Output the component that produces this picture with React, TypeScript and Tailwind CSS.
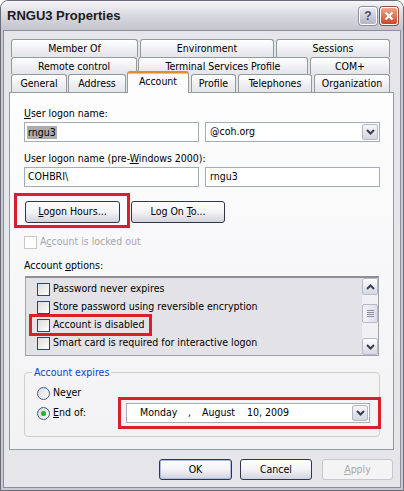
import React from "react";

type Tab = { label: string; cls: string; active?: boolean };

const tabRows: Tab[][] = [
  [
    { label: "Member Of", cls: "w-[127px]" },
    { label: "Environment", cls: "w-[134px] ml-[2px]" },
    { label: "Sessions", cls: "w-[114px] ml-[2px]" },
  ],
  [
    { label: "Remote control", cls: "w-[126px]" },
    { label: "Terminal Services Profile", cls: "w-[170px] ml-[1px]" },
    { label: "COM+", cls: "w-[80px] ml-[2px]" },
  ],
  [
    { label: "General", cls: "w-[56px]" },
    { label: "Address", cls: "w-[58px] ml-[1px]" },
    { label: "Account", cls: "w-[62px] ml-[1px]", active: true },
    { label: "Profile", cls: "w-[45px] ml-[2px]" },
    { label: "Telephones", cls: "w-[74px] ml-[2px]" },
    { label: "Organization", cls: "w-[76px] ml-[2px]" },
  ],
];

const rowHeights = ["h-[18px]", "h-[17px]", "h-[18px]"];

const options = [
  "Password never expires",
  "Store password using reversible encryption",
  "Account is disabled",
  "Smart card is required for interactive logon",
  "Account is trusted for delegation",
];

function Key({ children }: { children: React.ReactNode }) {
  return <span className="underline underline-offset-[1px]">{children}</span>;
}

function Chevron({ up }: { up?: boolean }) {
  return (
    <svg width="9" height="6" viewBox="0 0 9 6">
      <path
        d={up ? "M1 5 L4.5 1.5 L8 5" : "M1 1 L4.5 4.5 L8 1"}
        fill="none"
        stroke="#3a3d4e"
        strokeWidth="2"
      />
    </svg>
  );
}

function DropButton() {
  return (
    <div className="w-[16px] h-[16px] shrink-0 flex items-center justify-center rounded-[2px] border border-[#b3b8c6] bg-linear-to-b from-[#f7f7fa] to-[#d3d5e0]">
      <Chevron />
    </div>
  );
}

function CheckBox({ disabled }: { disabled?: boolean }) {
  return (
    <div
      className={
        disabled
          ? "w-[13px] h-[13px] shrink-0 border border-[#cac8c0] bg-white"
          : "w-[13px] h-[13px] shrink-0 border border-[#27496e] bg-linear-to-br from-[#dcdcd8] to-white"
      }
    />
  );
}

function Radio({ checked }: { checked?: boolean }) {
  return (
    <div className="w-[13px] h-[13px] shrink-0 rounded-full border border-[#3b5b80] bg-linear-to-br from-[#d8d8dc] to-white flex items-center justify-center">
      {checked && <div className="w-[5px] h-[5px] rounded-full bg-[#2fb02f] shadow-[0_0_1px_#7fe07f]" />}
    </div>
  );
}

function XPButton({
  children,
  cls,
  isDefault,
  disabled,
}: {
  children: React.ReactNode;
  cls: string;
  isDefault?: boolean;
  disabled?: boolean;
}) {
  if (disabled) {
    return (
      <div className={`${cls} flex items-center justify-center rounded-[3px] border border-[#c6c6cc] bg-[#f4f4f5] text-[#a9a9ad]`}>
        {children}
      </div>
    );
  }
  return (
    <div
      className={`${cls} flex items-center justify-center rounded-[3px] border border-[#2c3650] bg-linear-to-b from-white via-[#f3f3f6] to-[#d2d3dd] ${
        isDefault ? "shadow-[inset_0_0_0_1px_#a9c0e6]" : ""
      }`}
    >
      {children}
    </div>
  );
}

function ScrollButton({ up }: { up?: boolean }) {
  return (
    <div className="h-[17px] flex items-center justify-center rounded-[2px] border border-[#b6bac8] bg-linear-to-b from-white to-[#d5d7e3]">
      <Chevron up={up} />
    </div>
  );
}

export default function App() {
  return (
    <div className="w-[404px] h-[491px] flex flex-col rounded-t-[8px] border border-[#6b6b78] bg-[#c9c9d3] text-[10.5px] text-black [font-family:'DejaVu_Sans_Condensed','Liberation_Sans',sans-serif]">
      {/* Title bar */}
      <div className="h-[29px] shrink-0 flex items-center rounded-t-[7px] bg-linear-to-b from-[#f7f7fa] via-[#d8d8e0] to-[#c4c4cd] pl-[6px] pr-[5px] pt-[1px]">
        <span className="text-[13px] font-bold text-[#1b1b22] [font-family:'Liberation_Sans',sans-serif]">
          RNGU3 Properties
        </span>
        <div className="ml-auto flex gap-[3px]">
          <div className="w-[18px] h-[18px] flex items-center justify-center rounded-[3px] border border-white bg-linear-to-b from-[#e9e9f1] to-[#b3b4c6] shadow-[0_0_0_1px_#8d8fa3] text-[12px] font-bold text-[#4b4d62] [font-family:'Liberation_Sans',sans-serif]">
            ?
          </div>
          <div className="w-[18px] h-[18px] flex items-center justify-center rounded-[3px] border border-white bg-linear-to-b from-[#f0a488] to-[#c9452a] shadow-[0_0_0_1px_#9a4b3a]">
            <svg width="10" height="10" viewBox="0 0 10 10">
              <path d="M1.5 1.5 L8.5 8.5 M8.5 1.5 L1.5 8.5" stroke="white" strokeWidth="2.2" />
            </svg>
          </div>
        </div>
      </div>

      {/* Dialog body */}
      <div className="flex-1 mx-[2px] mb-[2px] border border-[#8e8e9a] bg-[#e6e6ea] pl-[5px] pr-[6px] pt-[8px] flex flex-col">
        {/* Tabs */}
        <div className="pl-[2px]">
          {tabRows.map((row, i) => (
            <div key={i} className={`flex ${rowHeights[i]}`}>
              {row.map((tab) =>
                tab.active ? (
                  <div
                    key={tab.label}
                    className={`${tab.cls} relative z-10 -mt-[3px] h-[22px] rounded-t-[3px] border border-b-0 border-[#919b9c] border-t-[2px] border-t-[#e68b2c] bg-[#fdfdfe] shadow-[inset_0_1px_0_#ffc83c] text-center leading-[16px]`}
                  >
                    {tab.label}
                  </div>
                ) : (
                  <div
                    key={tab.label}
                    className={`${tab.cls} h-full rounded-t-[3px] border border-b-0 border-[#919b9c] bg-linear-to-b from-white to-[#e4e4e9] text-center leading-[16px]`}
                  >
                    {tab.label}
                  </div>
                )
              )}
            </div>
          ))}
        </div>

        {/* Tab page */}
        <div className="h-[358px] border border-[#919b9c] bg-linear-to-b from-[#fdfdfe] to-[#f2f2f4] pl-[14px] pr-[13px] flex flex-col">
          <div className="mt-[13px] leading-[14px]">
            <Key>U</Key>ser logon name:
          </div>
          <div className="mt-[2px] flex gap-[6px]">
            <div className="w-[175px] h-[20px] flex items-center border border-[#a5acb5] bg-white pl-[2px]">
              <span className="bg-[#acacac] px-[1px] leading-[13px]">rngu3</span>
            </div>
            <div className="w-[175px] h-[20px] flex items-center border border-[#a5acb5] bg-white pl-[4px] pr-[1px]">
              <span className="flex-1">@coh.org</span>
              <DropButton />
            </div>
          </div>

          <div className="mt-[9px] leading-[14px]">
            User logon name (pre-<Key>W</Key>indows 2000):
          </div>
          <div className="mt-[2px] flex gap-[6px]">
            <div className="w-[175px] h-[20px] flex items-center border border-[#a5acb5] bg-white pl-[3px]">
              COHBRI\
            </div>
            <div className="w-[175px] h-[20px] flex items-center border border-[#a5acb5] bg-white pl-[4px]">
              rngu3
            </div>
          </div>

          <div className="mt-[14px] ml-[1px] flex gap-[11px]">
            <div className="relative">
              <XPButton cls="w-[95px] h-[22px]">
                <span>
                  <Key>L</Key>ogon Hours...
                </span>
              </XPButton>
              <div className="absolute -left-[11px] -top-[8px] -right-[10px] -bottom-[5px] border-[3px] border-[#d81f2c]" />
            </div>
            <XPButton cls="w-[94px] h-[22px]">
              <span>
                Log On <Key>T</Key>o...
              </span>
            </XPButton>
          </div>

          <div className="mt-[12px] h-[14px] flex items-center gap-[3px] text-[#a7a7ab]">
            <CheckBox disabled />
            <span>
              A<Key>c</Key>count is locked out
            </span>
          </div>

          <div className="mt-[9px] leading-[14px]">
            Account <Key>o</Key>ptions:
          </div>

          {/* Options list */}
          <div className="mt-[4px] ml-[1px] w-[354px] h-[80px] flex border border-[#a2a2aa] border-t-[2px] border-t-[#8e8e96] bg-[#e3e3e7]">
            <div className="flex-1 overflow-hidden pl-[11px] pt-[2px]">
              {options.map((opt) => (
                <div key={opt} className="relative h-[18px] flex items-center gap-[3px]">
                  <CheckBox />
                  <span>{opt}</span>
                  {opt === "Account is disabled" && (
                    <div className="absolute -left-[8px] -top-[2px] w-[123px] h-[22px] border-[3px] border-[#d81f2c]" />
                  )}
                </div>
              ))}
            </div>
            <div className="w-[16px] flex flex-col bg-[#f1f1f5]">
              <ScrollButton up />
              <div className="mt-[9px] h-[19px] flex flex-col items-center justify-center gap-[1px] rounded-[2px] border border-[#b6bac8] bg-linear-to-r from-[#f4f4f8] to-[#dcdde8]">
                <div className="w-[7px] h-[1px] bg-[#8c90a2]" />
                <div className="w-[7px] h-[1px] bg-[#8c90a2]" />
                <div className="w-[7px] h-[1px] bg-[#8c90a2]" />
                <div className="w-[7px] h-[1px] bg-[#8c90a2]" />
              </div>
              <div className="mt-auto">
                <ScrollButton />
              </div>
            </div>
          </div>

          {/* Account expires group */}
          <div className="relative mt-[16px] h-[65px] rounded-[4px] border border-[#d0d0c4] pl-[12px] pt-[13px]">
            <span className="absolute -top-[8px] left-[7px] bg-[#f5f5f7] px-[2px] leading-[14px] text-[#0046d5]">
              Account expires
            </span>
            <div className="h-[14px] flex items-center gap-[3px]">
              <Radio />
              <span>
                Ne<Key>v</Key>er
              </span>
            </div>
            <div className="mt-[3px] h-[20px] flex items-center gap-[3px]">
              <Radio checked />
              <span className="w-[70px]">
                <Key>E</Key>nd of:
              </span>
              <div className="relative">
                <div className="w-[244px] h-[20px] flex items-center border border-[#a5acb5] bg-white pl-[13px] pr-[1px]">
                  <span className="w-[48px]">Monday</span>
                  <span className="w-[14px]">,</span>
                  <span className="w-[45px]">August</span>
                  <span>10, 2009</span>
                  <div className="ml-auto">
                    <DropButton />
                  </div>
                </div>
                <div className="absolute -left-[8px] -top-[6px] -right-[11px] -bottom-[6px] border-[3px] border-[#d81f2c]" />
              </div>
            </div>
          </div>
        </div>

        {/* Dialog buttons */}
        <div className="mt-[9px] pr-[1px] flex justify-end">
          <XPButton cls="w-[73px] h-[21px]" isDefault>
            OK
          </XPButton>
          <XPButton cls="ml-[8px] w-[72px] h-[21px]">Cancel</XPButton>
          <XPButton cls="ml-[10px] w-[71px] h-[21px]" disabled>
            <span>
              <Key>A</Key>pply
            </span>
          </XPButton>
        </div>
      </div>
    </div>
  );
}
